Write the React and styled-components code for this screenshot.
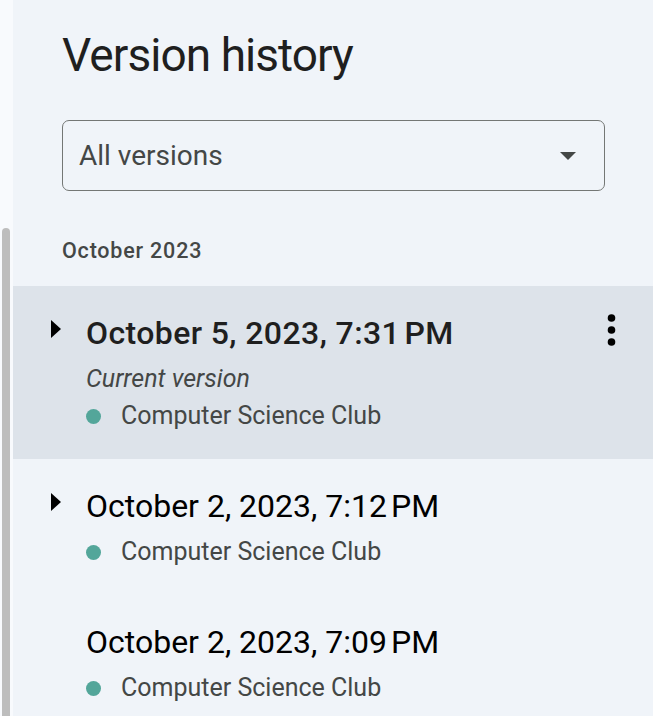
import React from 'react';
import styled, { createGlobalStyle } from 'styled-components';

const GlobalStyle = createGlobalStyle`
  html, body {
    margin: 0;
    padding: 0;
    background: #f8fafd;
  }
  body {
    font-family: Roboto, "Noto Sans", Arial, sans-serif;
  }
`;

const NNBSP = '\u202F';

const VERSIONS = [
  { id: 1, label: `October 5, 2023, 7:31${NNBSP}PM`, current: true, expandable: true, author: 'Computer Science Club' },
  { id: 2, label: `October 2, 2023, 7:12${NNBSP}PM`, expandable: true, author: 'Computer Science Club' },
  { id: 3, label: `October 2, 2023, 7:09${NNBSP}PM`, author: 'Computer Science Club' },
];

const Page = styled.div`
  display: flex;
  height: 716px;
  overflow: hidden;
`;

const Gutter = styled.div`
  width: 13px;
  flex-shrink: 0;
  display: flex;
  flex-direction: column;
  padding-top: 228px;
  box-sizing: border-box;
`;

const ScrollThumb = styled.div`
  margin-left: 2px;
  width: 8px;
  flex: 1;
  background: #bdbdbd;
  border-radius: 4px 4px 0 0;
`;

const Panel = styled.aside`
  flex: 1;
  background: #f0f4f9;
  display: flex;
  flex-direction: column;
`;

const Header = styled.div`
  padding: 27px 48px 0 49px;
`;

const Title = styled.h1`
  margin: 0;
  font-weight: 400;
  font-size: 46px;
  line-height: 56px;
  color: #1f1f1f;
  letter-spacing: -0.95px;
`;

const Select = styled.div`
  margin-top: 37px;
  height: 71px;
  box-sizing: border-box;
  border: 1.5px solid #747775;
  border-radius: 7px;
  display: flex;
  align-items: center;
  justify-content: space-between;
  padding: 0 28px 0 16px;
  font-size: 28px;
  color: #444746;
`;

const Caret = styled.span`
  width: 0;
  height: 0;
  border-left: 8px solid transparent;
  border-right: 8px solid transparent;
  border-top: 8px solid #444746;
`;

const Month = styled.div`
  margin-top: 47px;
  margin-bottom: 22px;
  font-size: 21.5px;
  font-weight: 500;
  letter-spacing: 0.8px;
  color: #444746;
  line-height: 26px;
`;

const List = styled.div`
  display: flex;
  flex-direction: column;
`;

const Row = styled.div`
  display: grid;
  grid-template-columns: 73px 1fr 46px;
  padding: 27px 0 28px;
  background: ${(p) => (p.$active ? '#dde3ea' : 'transparent')};
`;

const Toggle = styled.div`
  padding-left: 38px;
  padding-top: 7px;
`;

const Triangle = styled.span`
  display: block;
  width: 0;
  height: 0;
  border-top: 9px solid transparent;
  border-bottom: 9px solid transparent;
  border-left: 10px solid #000;
`;

const Body = styled.div`
  display: flex;
  flex-direction: column;
`;

const When = styled.div`
  font-size: 32px;
  line-height: 40px;
  font-weight: ${(p) => (p.$bold ? 500 : 400)};
  letter-spacing: ${(p) => (p.$bold ? '0.4px' : '0')};
  color: ${(p) => (p.$bold ? '#1f1f1f' : '#000')};
  white-space: nowrap;
`;

const Note = styled.div`
  margin-top: 11px;
  font-size: 25px;
  font-style: italic;
  line-height: 30px;
  color: #444746;
`;

const Author = styled.div`
  margin-top: ${(p) => (p.$afterNote ? 7 : 11)}px;
  display: flex;
  align-items: center;
  gap: 20px;
  font-size: 25px;
  line-height: 30px;
  color: #444746;
`;

const Dot = styled.span`
  width: 15px;
  height: 15px;
  border-radius: 50%;
  background: #53a69a;
  flex-shrink: 0;
`;

const More = styled.div`
  padding-top: 1px;
`;

function Kebab() {
  return (
    <svg width="9" height="32" viewBox="0 0 9 32" style={{ display: 'block' }}>
      <circle cx="4.5" cy="4" r="3.8" fill="#000" />
      <circle cx="4.5" cy="16" r="3.8" fill="#000" />
      <circle cx="4.5" cy="28" r="3.8" fill="#000" />
    </svg>
  );
}

function VersionRow({ item }) {
  return (
    <Row $active={item.current}>
      <Toggle>{item.expandable && <Triangle />}</Toggle>
      <Body>
        <When $bold={item.current}>{item.label}</When>
        {item.current && <Note>Current version</Note>}
        <Author $afterNote={item.current}>
          <Dot />
          {item.author}
        </Author>
      </Body>
      <More>{item.current && <Kebab />}</More>
    </Row>
  );
}

export default function App() {
  return (
    <>
      <GlobalStyle />
      <Page>
        <Gutter>
          <ScrollThumb />
        </Gutter>
        <Panel>
          <Header>
            <Title>Version history</Title>
            <Select>
              All versions
              <Caret />
            </Select>
            <Month>October 2023</Month>
          </Header>
          <List>
            {VERSIONS.map((v) => (
              <VersionRow key={v.id} item={v} />
            ))}
          </List>
        </Panel>
      </Page>
    </>
  );
}
